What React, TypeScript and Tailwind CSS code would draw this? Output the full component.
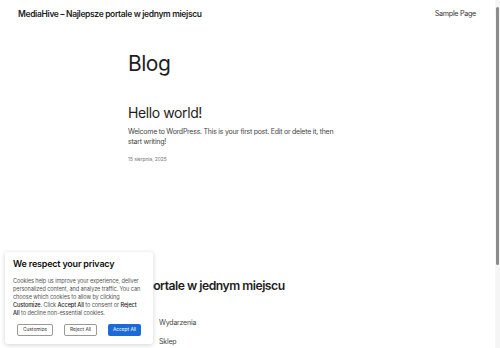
import React from 'react'

export default function App() {
  return (
    <div
      className="relative h-[348px] w-[500px] overflow-hidden bg-white text-[#1e1e1e]"
      style={{ fontFamily: 'Inter, "Noto Sans", sans-serif' }}
    >
      {/* Header */}
      <header className="flex items-center justify-between pl-[18px] pr-[24px] pt-[8px]">
        <p className="text-[8.5px] font-semibold tracking-[-0.35px]">
          MediaHive – Najlepsze portale w jednym miejscu
        </p>
        <a className="text-[7.2px] tracking-[-0.3px] text-[#333]">Sample Page</a>
      </header>

      {/* Main */}
      <main className="mx-auto w-[244px] pt-[30px]">
        <h1 className="text-[21px] font-normal leading-[26px] tracking-[-0.5px]">Blog</h1>

        <article className="pt-[27px]">
          <h2 className="text-[14px] font-normal leading-[18px] tracking-[-0.4px]">Hello world!</h2>
          <p className="mt-[5px] w-[212px] text-[7px] leading-[10px] tracking-[-0.25px] text-[#444]">
            Welcome to WordPress. This is your first post. Edit or delete it, then start writing!
          </p>
          <p className="mt-[9px] text-[5px] tracking-[-0.1px] text-[#777]">15 sierpnia, 2025</p>
        </article>
      </main>

      {/* Footer */}
      <footer className="pt-[115px]">
        <p className="whitespace-nowrap pl-[90px] text-[12.2px] font-semibold leading-[16px] tracking-[-0.5px]">
          Najlepsze portale w jednym miejscu
        </p>
        <nav className="flex flex-col gap-[8px] pl-[159px] pt-[24px] text-[7px] tracking-[-0.2px] text-[#444]">
          <a>Wydarzenia</a>
          <a>Sklep</a>
        </nav>
      </footer>

      {/* Cookie consent */}
      <div className="absolute left-[5px] top-[252px] w-[148px] rounded-[3px] bg-white px-[8px] pb-[8px] pt-[6px] shadow-[0_1px_5px_rgba(0,0,0,0.18)]">
        <p className="text-[9px] font-semibold leading-[12px] tracking-[-0.2px] text-[#111]">
          We respect your privacy
        </p>
        <p className="mt-[7px] w-[131px] text-[5.6px] leading-[8px] tracking-[-0.1px] text-[#555]">
          Cookies help us improve your experience, deliver personalized content, and analyze traffic. You can
          choose which cookies to allow by clicking <span className="font-medium text-[#222]">Customize</span>. Click{' '}
          <span className="font-medium text-[#222]">Accept All</span> to consent or{' '}
          <span className="font-medium text-[#222]">
            Reject
            <br />
            All
          </span>{' '}
          to decline non-essential cookies.
        </p>
        <div className="mt-[7px] flex items-center justify-between px-[4px]">
          <button className="h-[12px] w-[36px] rounded-[2px] border border-[#999] text-[4.8px] text-[#333]">
            Customize
          </button>
          <button className="h-[12px] w-[33px] rounded-[2px] border border-[#999] text-[4.8px] text-[#333]">
            Reject All
          </button>
          <button className="h-[12px] w-[33px] rounded-[2px] bg-[#1b6ad6] text-[4.8px] text-white">
            Accept All
          </button>
        </div>
      </div>

      {/* Scrollbar */}
      <div className="absolute right-0 top-0 flex h-full w-[5px] flex-col items-center bg-[#f5f5f5]">
        <div className="mt-[7px] h-[258px] w-[3px] rounded-full bg-[#8c8c8c]" />
      </div>
    </div>
  )
}
